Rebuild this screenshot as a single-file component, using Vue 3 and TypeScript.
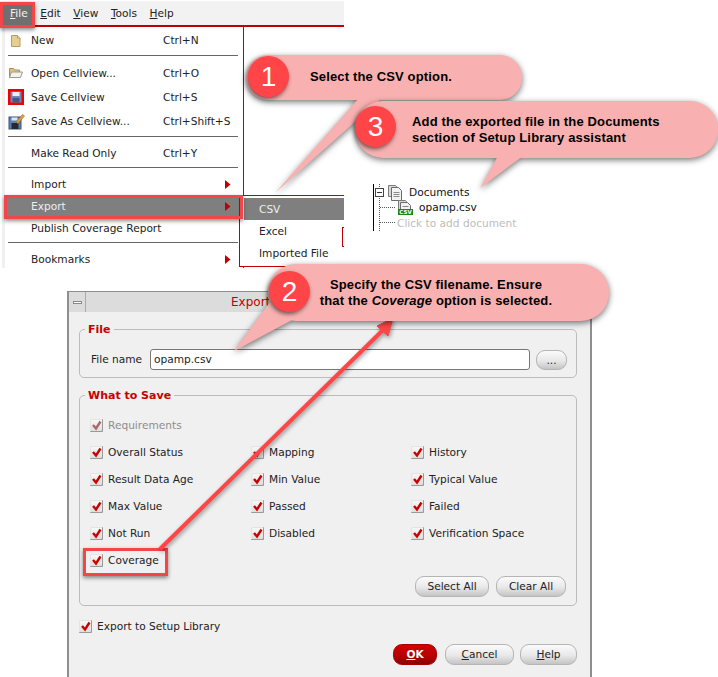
<script setup lang="ts">
interface MenuRow { label: string; key?: string; icon?: string; tall?: boolean; arrow?: boolean; active?: boolean; sepAfter?: boolean }
const menuBar = [
  { first: 'F', rest: 'ile' }, { first: 'E', rest: 'dit' }, { first: 'V', rest: 'iew' },
  { first: 'T', rest: 'ools' }, { first: 'H', rest: 'elp' },
]
const rows: MenuRow[] = [
  { label: 'New', key: 'Ctrl+N', icon: 'new', tall: true, sepAfter: true },
  { label: 'Open Cellview...', key: 'Ctrl+O', icon: 'open', tall: true },
  { label: 'Save Cellview', key: 'Ctrl+S', icon: 'save', tall: true },
  { label: 'Save As Cellview...', key: 'Ctrl+Shift+S', icon: 'saveas', tall: true, sepAfter: true },
  { label: 'Make Read Only', key: 'Ctrl+Y', sepAfter: true },
  { label: 'Import', arrow: true },
  { label: 'Export', arrow: true, active: true },
  { label: 'Publish Coverage Report', sepAfter: true },
  { label: 'Bookmarks', arrow: true },
]
const checks = [
  'Overall Status', 'Mapping', 'History',
  'Result Data Age', 'Min Value', 'Typical Value',
  'Max Value', 'Passed', 'Failed',
  'Not Run', 'Disabled', 'Verification Space',
  'Coverage',
]
</script>

<template>
  <div class="canvas">
    <header class="menubar">
      <span v-for="(m, i) in menuBar" :key="m.first" class="bar-item" :class="{ on: i === 0 }"><u>{{ m.first }}</u>{{ m.rest }}</span>
    </header>

    <nav class="menu">
      <template v-for="r in rows" :key="r.label">
        <div class="row" :class="{ tall: r.tall, active: r.active }">
          <span class="ico">
            <svg v-if="r.icon === 'new'" width="16" height="16" viewBox="0 0 16 16"><path d="M3.500 3.500h6l2.500 2.500v8.500H3.500z" fill="#e6cf94" stroke="#b99c60"/><path d="M9.500 3.500V6H12" fill="#f7eccb" stroke="#b99c60"/></svg>
            <svg v-else-if="r.icon === 'open'" width="18" height="16" viewBox="0 0 18 16"><path d="M1.500 12.500v-9h4l1 1.500h5v2" fill="#e8c27d" stroke="#b08a4a"/><path d="M1.500 12.500 3.500 7h11l-2 5.500z" fill="#f3f3ee" stroke="#9a9a8c"/></svg>
            <svg v-else-if="r.icon === 'save'" width="16" height="16" viewBox="0 0 16 16"><rect x="0" y="0" width="16" height="16" fill="#f00000"/><rect x="2.500" y="2.500" width="11" height="11" fill="#6f88bb"/><rect x="4.500" y="3" width="7" height="4" fill="#e9edf4"/><rect x="4.500" y="9" width="7" height="4.500" fill="#46587f"/></svg>
            <svg v-else-if="r.icon === 'saveas'" width="17" height="17" viewBox="0 0 17 17"><rect x="1" y="4" width="12" height="12" fill="#5d7fb5" stroke="#3c5280"/><rect x="3.500" y="10" width="7" height="6" fill="#26282e"/><rect x="3.500" y="4.500" width="6" height="3" fill="#dfe5ef"/><path d="M8 9 14.500 1.500l2 1.500L10 10.500z" fill="#e2a03c" stroke="#8a6a2b" stroke-width=".6"/></svg>
          </span>
          <span class="label">{{ r.label }}</span>
          <span class="key">{{ r.key }}</span>
          <svg v-if="r.arrow" class="caret" width="6" height="9" viewBox="0 0 6 9"><path d="M0 0l5.500 4.500L0 9z" fill="#c00000"/></svg>
        </div>
        <div v-if="r.sepAfter" class="sep"></div>
      </template>
    </nav>

    <div class="submenu">
      <div class="sub-row active">CSV</div>
      <div class="sub-row">Excel</div>
      <div class="sub-row">Imported File</div>
      <i class="sliver"></i>
    </div>

    <div class="mark mark-file"></div>
    <div class="mark mark-export"></div>

    <aside class="tree">
      <div class="tree-row root">
        <i class="minus"></i>
        <svg class="tree-ico" width="16" height="17" viewBox="0 0 16 17"><path d="M1.500 1.500h7l1 1v10h-8z" fill="#d8d8d8" stroke="#7a7a7a"/><path d="M4.500 3.500h7l3 3v10h-10z" fill="#f2f2f2" stroke="#6a6a6a"/><path d="M6.500 8.500h6M6.500 10.500h6M6.500 12.500h6" stroke="#8a8a8a"/></svg>
        <span>Documents</span>
      </div>
      <div class="tree-row child">
        <svg class="tree-ico" width="15" height="15" viewBox="0 0 15 15"><path d="M.500.500h7l1 1v8h-8z" fill="#d8d8d8" stroke="#7a7a7a"/><path d="M2.500 2.500h7l3 3v7h-10z" fill="#f2f2f2" stroke="#6a6a6a"/><path d="M4.500 6.500h6" stroke="#8a8a8a"/><rect x="0" y="9" width="15" height="6" fill="#1c851c"/><text x="7.500" y="14.300" class="csv-tag" text-anchor="middle">CSV</text></svg>
        <span>opamp.csv</span>
      </div>
      <div class="tree-row add">Click to add document</div>
    </aside>

    <section class="dialog">
      <div class="titlebar">
        <span class="sys"><i></i></span>
        <span class="title">Export</span>
      </div>
      <div class="dialog-body">
        <div class="group file-group">
          <span class="legend">File</span>
          <span class="field-label">File name</span>
          <div class="input">opamp.csv</div>
          <button class="btn dots">...</button>
        </div>
        <div class="group save-group">
          <span class="legend">What to Save</span>
          <label class="check req"><i class="box"><svg width="13" height="13" viewBox="0 0 13 13"><path d="M3 6l3 3.500 4.500-7" fill="none" stroke="#a8686c" stroke-width="2.400"/></svg></i>Requirements</label>
          <div class="check-grid">
            <label v-for="c in checks" :key="c" class="check"><i class="box"><svg width="13" height="13" viewBox="0 0 13 13"><path d="M3 6l3 3.500 4.500-7" fill="none" stroke="#cc0000" stroke-width="2.400"/></svg></i>{{ c }}</label>
          </div>
          <div class="group-actions">
            <button class="btn select-all">Select All</button>
            <button class="btn clear-all">Clear All</button>
          </div>
        </div>
        <label class="check to-lib"><i class="box"><svg width="13" height="13" viewBox="0 0 13 13"><path d="M3 6l3 3.500 4.500-7" fill="none" stroke="#cc0000" stroke-width="2.400"/></svg></i>Export to Setup Library</label>
        <div class="actions">
          <button class="btn ok"><u>O</u>K</button>
          <button class="btn cancel"><u>C</u>ancel</button>
          <button class="btn help"><u>H</u>elp</button>
        </div>
      </div>
    </section>

    <div class="mark mark-coverage"></div>
    <svg class="arrow" width="718" height="677" viewBox="0 0 718 677">
      <path d="M160 549 384 329" stroke="#ff4545" stroke-width="4" fill="none"/>
      <path d="M393 318 377 326 388 336z" fill="#ff4545" stroke="#ff4545" stroke-width="1"/>
    </svg>

    <div class="callout c1">
      <svg class="shape" width="276" height="45"><rect width="276" height="45" rx="22" fill="#f9b0b0"/><path d="M113 43h23L29 138z" fill="#f9b0b0"/></svg>
      <span class="badge">1</span>
      <p class="note">Select the CSV option.</p>
    </div>
    <div class="callout c3">
      <svg class="shape" width="363" height="57"><rect width="363" height="57" rx="28" fill="#f9b0b0"/><path d="M143 55h25L125 87z" fill="#f9b0b0"/></svg>
      <span class="badge">3</span>
      <p class="note">Add the exported file in the Documents<br />section of Setup Library assistant</p>
    </div>
    <div class="callout c2">
      <svg class="shape" width="341" height="57"><rect width="341" height="57" rx="28" fill="#f9b0b0"/><path d="M2 38 24 56-34 87z" fill="#f9b0b0"/></svg>
      <span class="badge">2</span>
      <p class="note">Specify the CSV filename. Ensure<br />that the <em>Coverage</em> option is selected.</p>
    </div>
  </div>
</template>

<style>
html, body { margin: 0; background: #fff; }
</style>

<style scoped>
.canvas {
  position: relative;
  width: 718px;
  height: 677px;
  overflow: hidden;
  background: #fff;
  font: 10.6px/1 "DejaVu Sans", sans-serif;
  color: #222;
}

/* Cut-outs of the application, placed on a free canvas */
.menubar {
  position: absolute;
  left: 0;
  top: 1px;
  width: 344px;
  height: 26px;
  display: flex;
  align-items: center;
  padding-left: 5px;
  box-sizing: border-box;
  background: #f2f2f2;
  border-bottom: 2px solid #c00000;
}
.bar-item { padding: 0 5px; margin-right: 2.500px; position: relative; z-index: 2; }
.bar-item.on { color: #f0f0f0; }

.menu {
  position: absolute;
  left: 2px;
  top: 26px;
  width: 242px;
  height: 242px;
  box-sizing: border-box;
  padding-top: 1px;
  overflow: hidden;
  background: #fff;
  border-top: 1px solid #c00000;
  border-right: 1px solid #c00000;
  border-left: 3px solid #f0f0f0;
}
.row {
  position: relative;
  display: flex;
  align-items: center;
  height: 22px;
  padding-left: 3px;
  white-space: nowrap;
}
.row.tall { height: 24px; }
.row.active { background: #7f7f7f; color: #eee; }
.ico { flex: 0 0 23px; display: flex; align-items: center; }
.label { flex: 0 0 132px; }
.caret { position: absolute; right: 12px; top: 7px; }
.sep { height: 1px; margin: 3px 5px 5px 3px; background: #666; }

.submenu {
  position: absolute;
  left: 239px;
  top: 195px;
  width: 105px;
  height: 72px;
  box-sizing: border-box;
  padding: 2px 0 0 4px;
  background: #fff;
  border: solid #c00000;
  border-width: 1px 0 1px 1px;
}
.sub-row {
  display: flex;
  align-items: center;
  height: 22px;
  padding-left: 15px;
}
.sub-row.active { background: #7f7f7f; color: #eee; }
.sliver {
  position: absolute;
  right: 0;
  top: 31px;
  width: 1px;
  height: 18px;
  border: solid #c00000;
  border-width: 1px 0 1px 1px;
}

.mark {
  position: absolute;
  box-sizing: border-box;
  border: 3px solid #f44548;
  box-shadow: 0 2px 4px rgba(0, 0, 0, .45);
}
.mark-file { left: 0; top: 2px; width: 35px; height: 26px; background: #6f6f6f; z-index: 1; }
.mark-export { left: 4px; top: 195px; width: 239px; height: 24px; }
.mark-coverage { left: 83px; top: 548px; width: 85px; height: 28px; }

.tree {
  position: absolute;
  left: 373px;
  top: 184px;
  height: 47px;
  border-left: 1px solid #000;
  color: #111;
}
.tree::before {
  content: "";
  position: absolute;
  left: 5px;
  top: 0;
  height: 47px;
  border-left: 1px dotted #555;
}
.tree-row { position: relative; display: flex; align-items: center; height: 16px; white-space: nowrap; }
.root { padding-left: 13px; }
.root .tree-ico { margin-right: 6px; }
.child { padding-left: 24px; height: 15px; }
.child .tree-ico { margin-right: 6px; }
.add { padding-left: 23px; color: #bdbdbd; }
.child::before, .add::before {
  content: "";
  position: absolute;
  left: 6px;
  top: 7px;
  width: 15px;
  border-top: 1px dotted #555;
}
.minus {
  position: absolute;
  left: 1px;
  top: 4px;
  width: 9px;
  height: 9px;
  border: 1px solid #444;
  background: linear-gradient(#333, #333) center / 5px 1px no-repeat #fff;
  box-sizing: border-box;
}
.csv-tag { font: bold 5.500px "DejaVu Sans", sans-serif; fill: #fff; }

.dialog {
  position: absolute;
  left: 67px;
  top: 291px;
  width: 525px;
  height: 386px;
  box-sizing: border-box;
  background: #f0f0f0;
  border: solid #8e8e8e;
  border-width: 1px 2px 0;
}
.titlebar {
  position: relative;
  display: flex;
  align-items: center;
  height: 20px;
  padding-left: 162px;
  background: #dcdcdc;
  color: #c00000;
  font-size: 12px;
}
.sys {
  position: absolute;
  left: 0;
  top: 0;
  width: 17px;
  height: 20px;
  box-sizing: border-box;
  display: flex;
  align-items: center;
  justify-content: center;
  border-right: 1px solid #aaa;
}
.sys i { width: 9px; height: 3px; border: 1px solid #888; box-sizing: border-box; background: #fff; }
.dialog-body { padding: 17px 13px 0 10px; }
.group {
  position: relative;
  box-sizing: border-box;
  border: 1px solid #bcbcbc;
  border-radius: 5px;
}
.legend {
  position: absolute;
  left: 5px;
  top: -6px;
  padding: 0 3px;
  background: #f0f0f0;
  color: #c80000;
  font-weight: bold;
  font-size: 11px;
}
.file-group {
  display: flex;
  align-items: flex-start;
  height: 49px;
  padding: 19px 0 0 11px;
}
.field-label { width: 59px; height: 21px; line-height: 21px; }
.input {
  width: 380px;
  height: 21px;
  line-height: 19px;
  box-sizing: border-box;
  padding-left: 3px;
  background: #fff;
  border: 1px solid #777;
  border-radius: 3px;
}
.btn {
  display: inline-flex;
  align-items: center;
  justify-content: center;
  height: 21px;
  padding: 0;
  box-sizing: border-box;
  font: inherit;
  color: #222;
  background: linear-gradient(#fbfbfb, #e8e8e8 55%, #c4c4c4);
  border: 1px solid #b5b5b5;
  border-radius: 9px;
}
.dots { width: 31px; height: 20px; margin: 1px 0 0 6px; }
.save-group { height: 211px; margin-top: 17px; padding: 16px 10px 0; }
.check { display: flex; align-items: center; height: 27px; white-space: nowrap; }
.box {
  width: 13px;
  height: 13px;
  margin-right: 5px;
  background: linear-gradient(#fafafa, #dcdcdc);
  box-shadow: inset -1px -1px 0 #9a9a9a, inset 1px 1px 0 #e4e4e4;
  border-radius: 1px;
}
.box svg { display: block; }
.req { color: #8d8d8d; }
.check-grid { display: grid; grid-template-columns: 161px 160px 1fr; }
.group-actions { display: flex; justify-content: flex-end; gap: 7px; margin-top: 2px; }
.select-all { width: 74px; }
.clear-all { width: 70px; }
.to-lib { margin-top: 7px; }
.actions { display: flex; justify-content: flex-end; gap: 6px; margin-top: 4px; }
.ok {
  width: 44px;
  margin-right: 2px;
  color: #fff;
  font-weight: bold;
  background: linear-gradient(#d30000, #b50000 60%, #8a0000);
  border-color: #a00;
}
.cancel { width: 69px; }
.help { width: 57px; }

.arrow {
  position: absolute;
  left: 0;
  top: 0;
  pointer-events: none;
  filter: drop-shadow(1px 2px 2px rgba(0, 0, 0, .4));
}

/* Annotation callouts lying over the cut-outs */
.callout { position: absolute; display: flex; align-items: center; box-sizing: border-box; }
.shape {
  position: absolute;
  left: 0;
  top: 0;
  overflow: visible;
  filter: drop-shadow(0 2px 3px rgba(0, 0, 0, .55));
}
.badge {
  position: absolute;
  width: 41px;
  height: 41px;
  display: flex;
  align-items: center;
  justify-content: center;
  border-radius: 50%;
  background: #ff4548;
  color: #fff;
  font: 28px/1 "Liberation Sans", sans-serif;
  box-shadow: -1px 2px 4px rgba(0, 0, 0, .55);
}
.note {
  position: relative;
  margin: 0;
  font: bold 13px/16px "Liberation Sans", sans-serif;
  color: #000;
  white-space: nowrap;
  letter-spacing: .15px;
}
.c1 { left: 246px; top: 55px; width: 276px; height: 45px; z-index: 3; padding: 0 0 2px 64px; }
.c1 .badge { left: 2px; top: 1px; }
.c3 { left: 355px; top: 101px; width: 363px; height: 57px; z-index: 4; padding-left: 57px; }
.c3 .badge { left: 0; top: 5px; }
.c2 { left: 268px; top: 264px; width: 341px; height: 57px; z-index: 4; justify-content: center; padding-right: 5px; text-align: center; }
.c2 .badge { left: 1px; top: 7px; }
</style>
